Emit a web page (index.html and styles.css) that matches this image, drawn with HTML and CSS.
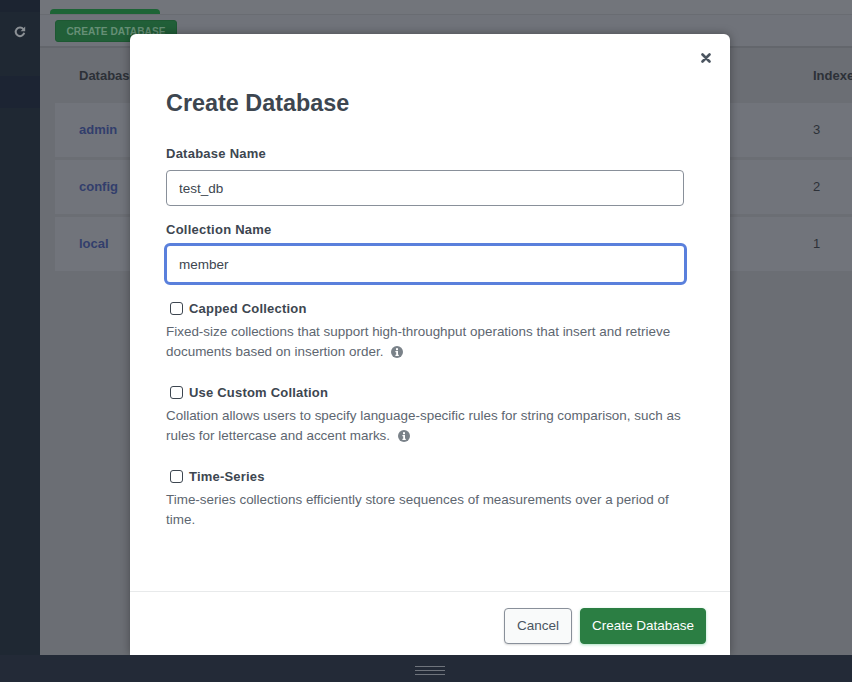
FILE: index.html
```html
<!DOCTYPE html>
<html lang="en">
<head>
<meta charset="utf-8">
<title>Create Database</title>
<link rel="stylesheet" href="styles.css">
</head>
<body>
<div class="app">
  <div class="workspace">
    <aside class="sidebar">
      <div class="side-top"></div>
      <div class="side-refresh">
        <svg class="refresh-icon" viewBox="0 0 12 12" width="12" height="12"><path d="M9.4 3.2A4.3 4.3 0 1 0 10.2 6.8" fill="none" stroke="currentColor" stroke-width="2"/><path d="M11.2 0.6V5.2H6.6Z" fill="currentColor"/></svg>
      </div>
      <div class="side-active"></div>
    </aside>
    <main class="main">
      <div class="tabs"><div class="tab-green"></div></div>
      <div class="toolbar"><button class="btn-create-bg">CREATE DATABASE</button></div>
      <div class="table">
        <div class="thead"><span class="col-name">Database Name</span><span class="col-idx">Indexes</span></div>
        <div class="trow"><a class="col-name">admin</a><span class="col-idx">3</span></div>
        <div class="trow"><a class="col-name">config</a><span class="col-idx">2</span></div>
        <div class="trow"><a class="col-name">local</a><span class="col-idx">1</span></div>
      </div>
    </main>
  </div>
  <footer class="footer">
    <div class="grip"><i></i><i></i><i></i></div>
  </footer>
</div>
<section class="modal">
  <div class="modal-body">
    <button class="close" aria-label="Close">
      <svg viewBox="0 0 10 10" width="10" height="10"><path d="M1.5 1.5L8.5 8.5M8.5 1.5L1.5 8.5" stroke="currentColor" stroke-width="2.6" stroke-linecap="round" fill="none"/></svg>
    </button>
    <h1 class="title">Create Database</h1>
    <label class="label">Database Name</label>
    <input class="input" value="test_db">
    <label class="label label-second">Collection Name</label>
    <input class="input input-focus" value="member">
    <div class="opt">
      <div class="opt-head"><span class="check"></span><span class="opt-title">Capped Collection</span></div>
      <p class="opt-desc">Fixed-size collections that support high-throughput operations that insert and retrieve documents based on insertion order. <svg class="info" viewBox="0 0 12 12" width="12" height="12"><circle cx="6" cy="6" r="6" fill="currentColor"/><rect x="5" y="2.2" width="2" height="2" fill="#fff"/><path d="M4.4 5.1H7V8.8H7.8V10H4.4V8.8H5.2V6.3H4.4Z" fill="#fff"/></svg></p>
    </div>
    <div class="opt">
      <div class="opt-head"><span class="check"></span><span class="opt-title">Use Custom Collation</span></div>
      <p class="opt-desc">Collation allows users to specify language-specific rules for string comparison, such as rules for lettercase and accent marks. <svg class="info" viewBox="0 0 12 12" width="12" height="12"><circle cx="6" cy="6" r="6" fill="currentColor"/><rect x="5" y="2.2" width="2" height="2" fill="#fff"/><path d="M4.4 5.1H7V8.8H7.8V10H4.4V8.8H5.2V6.3H4.4Z" fill="#fff"/></svg></p>
    </div>
    <div class="opt">
      <div class="opt-head"><span class="check"></span><span class="opt-title">Time-Series</span></div>
      <p class="opt-desc">Time-series collections efficiently store sequences of measurements over a period of time.</p>
    </div>
  </div>
  <div class="modal-footer">
    <button class="btn btn-cancel">Cancel</button>
    <button class="btn btn-primary">Create Database</button>
  </div>
</section>
</body>
</html>
```
FILE: styles.css
```css
* { box-sizing: border-box; }
html, body { margin: 0; height: 100%; overflow: hidden; }
body { font-family: "Liberation Sans", Arial, sans-serif; color: #3d4650; background: #fff; }
.app { display: flex; flex-direction: column; height: 682px; }
.workspace { flex: 1; display: flex; min-height: 0; }
.sidebar { width: 40px; background: #1f2833; display: flex; flex-direction: column; }
.side-top { height: 12px; background: #1c2431; }
.side-refresh { height: 40px; display: flex; align-items: center; justify-content: center; color: #8b9095; }
.refresh-icon { display: block; }
.side-active { height: 32px; margin-top: 24px; background: #1c2433; }
.main { flex: 1; background: #6b6e74; min-width: 0; overflow: hidden; }
.tabs { height: 15px; background: #72757b; padding-left: 10px; display: flex; align-items: flex-end; border-bottom: 1px solid #696c72; }
.tab-green { width: 110px; height: 5px; background: #1d6436; border-radius: 4px 4px 0 0; }
.toolbar { height: 33px; background: #70737a; padding: 5px 15px; border-bottom: 2px solid #63666c; }
.btn-create-bg { display: block; height: 22px; width: 122px; padding: 0; background: #215f38; border: 1px solid #1d5832; border-radius: 3px; color: #668f76; font: bold 10.2px "Liberation Sans", Arial, sans-serif; }
.table { padding: 0 0 0 15px; }
.thead { height: 55px; display: flex; align-items: center; font-size: 13px; font-weight: bold; color: #2d3138; padding-left: 24px; }
.trow { height: 54px; margin-bottom: 3px; display: flex; align-items: center; background: #71747b; font-size: 13px; color: #2d3138; padding: 0 0 2px 24px; }
.col-name { width: 734px; flex: none; }
a.col-name { color: #323e6c; font-weight: bold; }
.col-idx { flex: none; }
.footer { height: 27px; background: #232a37; position: relative; z-index: 3; display: flex; justify-content: center; align-items: center; padding-top: 3px; }
.grip { width: 30px; margin-left: 8px; display: flex; flex-direction: column; gap: 3px; }
.grip i { display: block; height: 1px; background: #6f747c; }
.modal { position: absolute; left: 130px; top: 34px; width: 600px; height: 621px; background: #fff; border-radius: 6px 6px 0 0; box-shadow: 0 0 10px rgba(0,0,0,.35); display: flex; flex-direction: column; z-index: 2; }
.modal-body { flex: 1; padding: 53px 46px 0 36px; position: relative; }
.close { position: absolute; right: 19px; top: 19px; width: 10px; height: 10px; padding: 0; border: 0; background: none; color: #4b5560; display: block; line-height: 0; }
.title { margin: 0 0 27px; font-size: 23.4px; line-height: 32px; font-weight: bold; color: #3d4650; }
.label { display: block; font-size: 13px; line-height: 16px; font-weight: bold; letter-spacing: .25px; color: #3d4650; margin-bottom: 8px; }
.label-second { margin-top: 16px; margin-bottom: 5px; }
.input { display: block; width: 518px; height: 36px; border: 1px solid #89909a; border-radius: 4px; padding: 0 12px; font: 13.5px "Liberation Sans", Arial, sans-serif; color: #3d4650; background: #fff; outline: none; }
.input-focus { width: 523px; height: 42px; margin-left: -2.5px; padding-left: 12.5px; border: 3px solid #5a80dc; border-radius: 6px; }
.opt { margin-top: 14px; }
.opt + .opt { margin-top: 21px; }
.opt-head { display: flex; align-items: center; height: 18px; margin-bottom: 5px; }
.check { width: 13px; height: 13px; margin-left: 4px; border: 1.5px solid #3d4650; border-radius: 3px; }
.opt-title { margin-left: 6px; font-size: 13px; font-weight: bold; letter-spacing: .2px; color: #3d4650; }
.opt-desc { margin: 0; font-size: 13.45px; line-height: 20px; color: #5d6670; width: 518px; }
.info { color: #7a8289; vertical-align: -2px; margin-left: 4px; }
.modal-footer { height: 64px; flex: none; border-top: 1px solid #e8eaeb; display: flex; justify-content: flex-end; gap: 8px; padding: 16px 24px 0 0; }
.btn { height: 36px; font: 13.5px "Liberation Sans", Arial, sans-serif; border-radius: 4px; padding: 0 0 2px; }
.btn-cancel { width: 68px; background: #f9fafa; color: #4a5561; border: 1px solid #89909a; box-shadow: 0 1px 2px rgba(0,0,0,.15); }
.btn-primary { width: 126px; background: #2b7e43; color: #fff; border: 1px solid #2b7e43; box-shadow: 0 1px 3px rgba(19,170,82,.35); }
```
